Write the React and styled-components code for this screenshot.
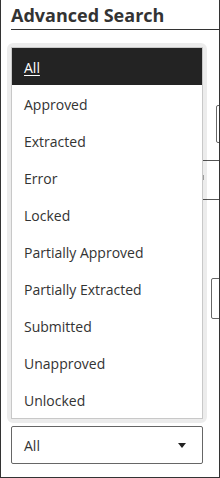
import React from "react";
import styled, { createGlobalStyle } from "styled-components";

const Global = createGlobalStyle`
  html, body { margin: 0; padding: 0; background: #fff; }
  body { font-family: "Open Sans", "Liberation Sans", sans-serif; }
  * { box-sizing: border-box; }
`;

const Frame = styled.div`
  position: relative;
  width: 220px;
  height: 478px;
  border-left: 1px solid #333;
  border-right: 1px solid #333;
  border-bottom: 1px solid #333;
  overflow: hidden;
  display: flex;
  flex-direction: column;
  background: #fff;
`;

const Header = styled.div`
  margin-left: 10px;
  height: 30px;
  border-bottom: 1px solid #333;
  padding-top: 2px;
  flex-shrink: 0;
`;

const Title = styled.h1`
  margin: 0;
  font-size: 18px;
  line-height: 27px;
  font-weight: 700;
  color: #333;
  white-space: nowrap;
`;

const Field = styled.div`
  flex-shrink: 0;
  margin-top: ${(p) => p.$top}px;
  margin-left: ${(p) => p.$left}px;
  width: 120px;
  height: ${(p) => p.$h}px;
  border: 1px solid #666;
  border-radius: 2px;
`;

const Band = styled.div`
  flex-shrink: 0;
  margin-top: 17px;
  margin-left: 10px;
  height: 40px;
  border-top: 1px solid #555;
  border-bottom: 1px solid #555;
  display: flex;
  align-items: flex-start;
`;

const Tick = styled.span`
  display: block;
  margin-left: 192px;
  margin-top: 14px;
  width: 1px;
  height: 5px;
  background: #aaa;
`;

const Select = styled.div`
  flex-shrink: 0;
  margin-top: 107px;
  margin-left: 10px;
  width: 192px;
  height: 38px;
  border: 1px solid #666;
  border-radius: 2px;
  display: flex;
  align-items: center;
  justify-content: space-between;
  padding: 0 16px 0 12px;
  font-size: 14px;
  color: #333;
`;

const Caret = styled.svg`
  width: 8px;
  height: 5px;
  display: block;
`;

const Dropdown = styled.div`
  position: absolute;
  left: 6px;
  top: 43px;
  width: 200px;
  height: 380px;
  border: 4px solid rgba(0, 0, 0, 0.075);
  border-radius: 6px;
  background-clip: padding-box;
`;

const List = styled.ul`
  list-style: none;
  margin: 0;
  padding: 0;
  height: 100%;
  background: #fff;
  border: 1px solid #c8c8c8;
`;

const Item = styled.li`
  height: 37px;
  line-height: 35px;
  padding: 2px 0 0 12px;
  font-size: 14px;
  white-space: nowrap;
  color: ${(p) => (p.$active ? "#fff" : "#333")};
  background: ${(p) => (p.$active ? "#232323" : "#fff")};
  text-decoration: ${(p) => (p.$active ? "underline" : "none")};
  text-underline-offset: 2px;
`;

const options = [
  "All",
  "Approved",
  "Extracted",
  "Error",
  "Locked",
  "Partially Approved",
  "Partially Extracted",
  "Submitted",
  "Unapproved",
  "Unlocked",
];

export default function App() {
  return (
    <>
      <Global />
      <Frame>
        <Header>
          <Title>Advanced Search</Title>
        </Header>
        <Field $top={75} $left={215} $h={38} />
        <Band>
          <Tick />
        </Band>
        <Field $top={78} $left={210} $h={41} />
        <Select>
          <span>All</span>
          <Caret viewBox="0 0 8 5">
            <polygon points="0,0 8,0 4,5" fill="#222" />
          </Caret>
        </Select>
        <Dropdown>
          <List>
            {options.map((o, i) => (
              <Item key={o} $active={i === 0}>
                {o}
              </Item>
            ))}
          </List>
        </Dropdown>
      </Frame>
    </>
  );
}
